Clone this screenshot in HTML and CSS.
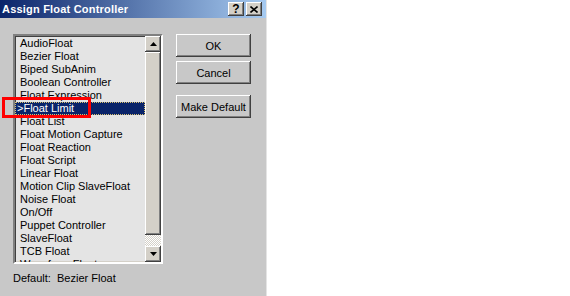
FILE: index.html
```html
<!DOCTYPE html>
<html lang="en">
<head>
    <meta charset="UTF-8">
    <title>Assign Float Controller</title>
    <link rel="stylesheet" href="styles.css">
</head>
<body>
    <div class="dialog">
        <div class="titlebar">
            <span class="title">Assign Float Controller</span>
            <div class="title-buttons">
                <div class="caption-btn help">?</div>
                <div class="caption-btn">
                    <svg width="8" height="7" viewBox="0 0 8 7">
                        <path d="M0.5 0.5 L7.5 6.5 M7.5 0.5 L0.5 6.5" stroke="#000" stroke-width="1.6" fill="none"/>
                    </svg>
                </div>
            </div>
        </div>

        <div class="content">
            <div class="listbox">
                <ul class="items">
                    <li>AudioFloat</li>
                    <li>Bezier Float</li>
                    <li>Biped SubAnim</li>
                    <li>Boolean Controller</li>
                    <li>Float Expression</li>
                    <li class="selected">&gt;Float Limit</li>
                    <li>Float List</li>
                    <li>Float Motion Capture</li>
                    <li>Float Reaction</li>
                    <li>Float Script</li>
                    <li>Linear Float</li>
                    <li>Motion Clip SlaveFloat</li>
                    <li>Noise Float</li>
                    <li>On/Off</li>
                    <li>Puppet Controller</li>
                    <li>SlaveFloat</li>
                    <li>TCB Float</li>
                    <li>Waveform Float</li>
                </ul>
                <div class="scrollbar">
                    <div class="scroll-btn">
                        <svg width="7" height="4" viewBox="0 0 7 4"><polygon points="3.5,0 7,4 0,4" fill="#000"/></svg>
                    </div>
                    <div class="thumb"></div>
                    <div class="track"></div>
                    <div class="scroll-btn">
                        <svg width="7" height="4" viewBox="0 0 7 4"><polygon points="0,0 7,0 3.5,4" fill="#000"/></svg>
                    </div>
                </div>
            </div>

            <div class="actions">
                <button>OK</button>
                <button>Cancel</button>
                <button class="make-default">Make Default</button>
            </div>
        </div>

        <div class="status">Default:&nbsp; Bezier Float</div>

        <div class="highlight"></div>
    </div>
</body>
</html>
```

FILE: styles.css
```css
* {
    margin: 0;
    padding: 0;
    box-sizing: border-box;
}

body {
    background: #fff;
    font-family: "Liberation Sans", Arial, sans-serif;
    font-size: 11px;
    color: #000;
}

.dialog {
    position: relative;
    width: 267px;
    height: 296px;
    background: #c8c8c8;
    border-right: 1px solid #e4e4e4;
}

/* title bar */
.titlebar {
    height: 18px;
    display: flex;
    align-items: center;
    padding: 0 4px 0 2px;
    background: linear-gradient(to right, #0a246a, #a6caf0);
}

.title {
    color: #fff;
    font-weight: bold;
    font-size: 11px;
    letter-spacing: 0.2px;
}

.title-buttons {
    margin-left: auto;
    display: flex;
    gap: 2px;
}

.caption-btn {
    width: 16px;
    height: 14px;
    display: flex;
    align-items: center;
    justify-content: center;
    background: #d4d0c8;
    box-shadow: inset -1px -1px #404040, inset 1px 1px #fff, inset -2px -2px #808080;
    font-weight: bold;
    font-size: 12px;
    line-height: 1;
}

/* main area */
.content {
    display: flex;
    padding: 16px 0 0 13px;
}

.listbox {
    width: 150px;
    height: 230px;
    display: flex;
    background: #e4e4e4;
    border: 2px solid;
    border-color: #808080 #fff #fff #808080;
    box-shadow: inset 1px 1px #404040, inset -1px -1px #d4d0c8;
}

.items {
    flex: 1;
    list-style: none;
    overflow: hidden;
    padding-top: 1px;
}

.items li {
    height: 13px;
    line-height: 13px;
    padding-left: 5px;
    white-space: nowrap;
}

.items li.selected {
    background: #0a246a;
    color: #fff;
    padding-left: 2px;
    outline: 1px dotted #d8c070;
    outline-offset: -1px;
}

.scrollbar {
    width: 16px;
    display: flex;
    flex-direction: column;
}

.scroll-btn,
.thumb {
    background: #d4d0c8;
    box-shadow: inset -1px -1px #404040, inset 1px 1px #fff, inset -2px -2px #808080;
}

.scroll-btn {
    height: 16px;
    display: flex;
    align-items: center;
    justify-content: center;
}

.thumb {
    height: 183px;
}

.track {
    flex: 1;
    background-color: #fff;
    background-image: conic-gradient(#d4d0c8 25%, #fff 0 50%, #d4d0c8 0 75%, #fff 0);
    background-size: 2px 2px;
}

.actions {
    display: flex;
    flex-direction: column;
    gap: 4px;
    margin-left: 13px;
}

button {
    width: 75px;
    height: 23px;
    background: #c8c8c8;
    border: none;
    box-shadow: inset -1px -1px #404040, inset 1px 1px #fff, inset -2px -2px #808080;
    font-family: "Liberation Sans", Arial, sans-serif;
    font-size: 11px;
    color: #000;
}

.make-default {
    margin-top: 7px;
}

.status {
    padding: 8px 0 0 13px;
    line-height: 13px;
}

/* red annotation box */
.highlight {
    position: absolute;
    left: 2px;
    top: 97px;
    width: 89px;
    height: 21px;
    border: 3px solid #f00;
}
```
